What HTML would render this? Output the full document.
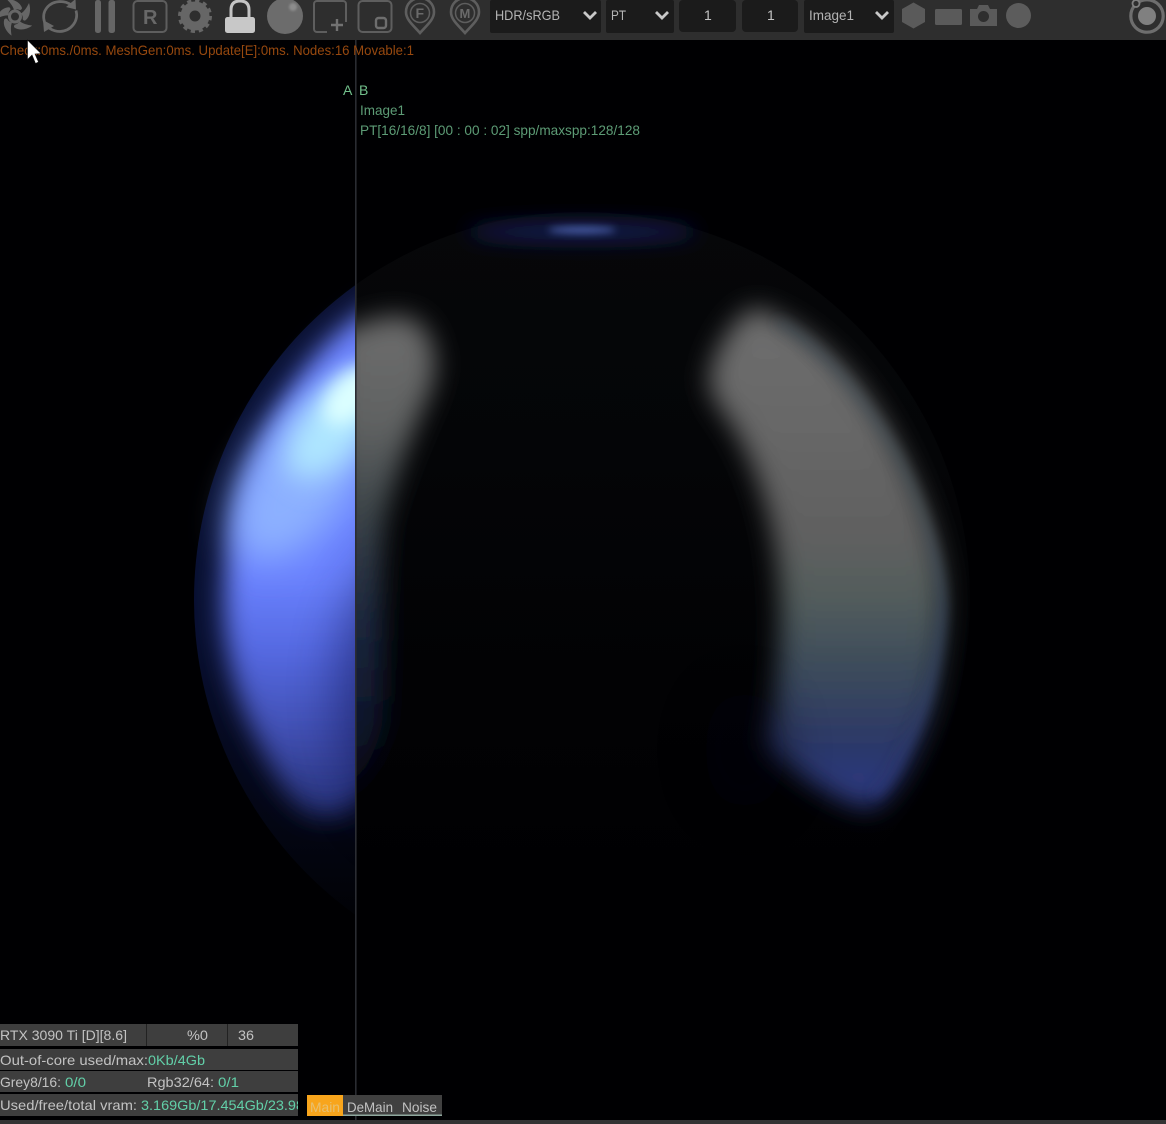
<!DOCTYPE html>
<html><head><meta charset="utf-8"><style>
html,body{margin:0;padding:0;background:#000;width:1166px;height:1124px;overflow:hidden}
svg{display:block}
text{font-family:"Liberation Sans",sans-serif;font-size:14px}
</style></head><body>
<svg width="1166" height="1124" viewBox="0 0 1166 1124" xmlns="http://www.w3.org/2000/svg">
<defs>
<clipPath id="L"><rect x="0" y="40" width="356" height="1080"/></clipPath>
<clipPath id="R"><rect x="356" y="40" width="810" height="1080"/></clipPath>
<filter id="b18" x="-80%" y="-80%" width="260%" height="260%"><feGaussianBlur stdDeviation="18"/></filter>
<filter id="b14" x="-60%" y="-60%" width="220%" height="220%"><feGaussianBlur stdDeviation="14"/></filter>
<filter id="b11" x="-60%" y="-60%" width="220%" height="220%"><feGaussianBlur stdDeviation="11"/></filter>
<filter id="b13" x="-60%" y="-60%" width="220%" height="220%"><feGaussianBlur stdDeviation="13"/></filter>
<filter id="b6" x="-60%" y="-60%" width="220%" height="220%"><feGaussianBlur stdDeviation="6"/></filter>
<filter id="b9" x="-60%" y="-60%" width="220%" height="220%"><feGaussianBlur stdDeviation="9"/></filter>
<filter id="b24" x="-80%" y="-80%" width="260%" height="260%"><feGaussianBlur stdDeviation="24"/></filter>
<filter id="b4" x="-50%" y="-200%" width="200%" height="500%"><feGaussianBlur stdDeviation="4"/></filter>
<filter id="bw" x="-50%" y="-300%" width="200%" height="700%"><feGaussianBlur stdDeviation="10"/></filter>
<filter id="b1" x="-60%" y="-60%" width="220%" height="220%"><feGaussianBlur stdDeviation="1"/></filter>
<linearGradient id="dim" x1="0" y1="285" x2="0" y2="915" gradientUnits="userSpaceOnUse">
<stop offset="0" stop-color="#0a1030"/><stop offset=".15" stop-color="#0a1236"/><stop offset=".55" stop-color="#080f30"/><stop offset=".8" stop-color="#040718"/><stop offset="1" stop-color="#010206"/></linearGradient>
<linearGradient id="blue" x1="310" y1="330" x2="310" y2="820" gradientUnits="userSpaceOnUse">
<stop offset="0" stop-color="#6c82ff"/><stop offset=".5" stop-color="#6a82ff"/><stop offset=".66" stop-color="#5468e0"/><stop offset=".84" stop-color="#3e4cac"/><stop offset="1" stop-color="#242f74"/></linearGradient>
<linearGradient id="gl" x1="0" y1="320" x2="0" y2="790" gradientUnits="userSpaceOnUse">
<stop offset="0" stop-color="#6c6c6c"/><stop offset=".22" stop-color="#606262"/><stop offset=".4" stop-color="#3e464a"/><stop offset=".64" stop-color="#1c2840"/><stop offset="1" stop-color="#050a20"/></linearGradient>
<linearGradient id="gr" x1="0" y1="315" x2="0" y2="805" gradientUnits="userSpaceOnUse">
<stop offset="0" stop-color="#6e6e6e"/><stop offset=".45" stop-color="#606060"/><stop offset=".58" stop-color="#525c5b"/><stop offset=".72" stop-color="#3c4b5a"/><stop offset=".88" stop-color="#2b3768"/><stop offset="1" stop-color="#2e3c88"/></linearGradient>
<linearGradient id="rim" x1="0" y1="320" x2="0" y2="800" gradientUnits="userSpaceOnUse">
<stop offset="0" stop-color="#3e5262"/><stop offset=".4" stop-color="#5e747e"/><stop offset=".65" stop-color="#50689a"/><stop offset="1" stop-color="#3848a0"/></linearGradient>
<linearGradient id="wash" x1="0" y1="212" x2="0" y2="900" gradientUnits="userSpaceOnUse">
<stop offset="0" stop-color="#060709"/><stop offset=".35" stop-color="#040507"/><stop offset=".7" stop-color="#020204"/><stop offset="1" stop-color="#000002"/></linearGradient>
<path id="blade" d="M14 10 C13 6 10 2.500 6.500 -1 C13 -1 20 2 22 8 C22 9 21 10 20 10 C18 9 16 9 14 10 Z"/>
</defs>

<rect width="1166" height="1124" fill="#000002"/>

<!-- A side -->
<g clip-path="url(#L)">
<circle cx="582" cy="600" r="388" fill="url(#dim)"/>
<path d="M380 300 L356 318 C316 346 278 398 252 462 C234 510 224 560 224 602 C224 652 236 700 258 742 C276 780 296 812 320 816 C338 818 350 812 380 780 Z" fill="url(#blue)" filter="url(#b13)"/>
<ellipse cx="420" cy="690" rx="85" ry="150" fill="#000030" opacity=".42" filter="url(#b24)"/>
<ellipse cx="300" cy="480" rx="92" ry="50" transform="rotate(-55 300 480)" fill="#8cb0ff" filter="url(#b18)"/>
<ellipse cx="335" cy="425" rx="65" ry="32" transform="rotate(-50 335 425)" fill="#aee6ff" filter="url(#b14)"/>
<ellipse cx="352" cy="395" rx="36" ry="20" transform="rotate(-48 352 395)" fill="#dcffff" filter="url(#b9)"/>
</g>

<!-- B side -->
<g clip-path="url(#R)">
<circle cx="582" cy="600" r="388" fill="url(#wash)"/>
<ellipse cx="582" cy="232" rx="115" ry="9" fill="#131e58" filter="url(#bw)"/>
<ellipse cx="582" cy="230" rx="34" ry="3.500" fill="#4c60aa" filter="url(#b4)"/>
<path d="M335 335 C365 322 395 310 414 320 C436 335 440 365 430 392 C414 428 396 470 384 525 C378 590 386 660 382 725 C372 768 350 790 335 790 Z" fill="url(#gl)" filter="url(#b13)"/>
<path d="M757 308 C795 322 832 350 862 390 C892 430 922 490 937 550 C947 590 945 640 933 700 C919 750 900 788 872 808 C850 808 800 780 765 745 C778 695 784 625 778 572 C774 522 758 472 736 432 C723 408 706 398 710 372 C718 340 742 310 757 308 Z" fill="url(#gr)" filter="url(#b13)"/>
<path d="M778 322 C820 345 862 395 897 455 C922 505 940 560 942 605 C940 655 927 710 907 745 C897 768 887 785 874 795" fill="none" stroke="url(#rim)" stroke-width="5" filter="url(#b6)" opacity=".7"/>
<ellipse cx="745" cy="750" rx="40" ry="60" fill="#000008" opacity=".4" filter="url(#b24)"/>
</g>

<!-- divider -->
<rect x="355" y="40" width="1.6" height="1080" fill="#2a2c32"/>

<!-- toolbar -->
<rect width="1166" height="40" fill="#2e2e2e"/>
<g fill="#666">
<use href="#blade"/>
<use href="#blade" transform="rotate(72 15 16.500)"/>
<use href="#blade" transform="rotate(144 15 16.500)"/>
<use href="#blade" transform="rotate(216 15 16.500)"/>
<use href="#blade" transform="rotate(288 15 16.500)"/>
</g>
<circle cx="15" cy="16.500" r="5.500" fill="none" stroke="#666" stroke-width="3"/>
<g fill="none" stroke="#686868" stroke-width="2.700">
<path d="M44.500 22 C41 11 49 2 60 1.500 C64 1.500 68 2.500 71 5"/>
<path d="M76 10.500 C79 21 71 31 60 31.500 C56 31.500 52 30 49 28"/>
</g>
<path d="M66 7 L76 9.500 L75.500 -1 Z M43 20 L54 26 L44 32 Z" fill="#686868"/>
<rect x="95" y="0" width="6" height="33" rx="2.500" fill="#666"/>
<rect x="108.500" y="0" width="6.500" height="33" rx="2.500" fill="#666"/>
<rect x="133.500" y="1" width="33" height="31" rx="4" fill="none" stroke="#5e5e5e" stroke-width="2"/>
<text x="143" y="24" fill="#686868" style="font-size:20px;font-weight:bold">R</text>
<circle cx="195" cy="16" r="14.500" fill="none" stroke="#666" stroke-width="5" stroke-dasharray="4 3.590"/>
<circle cx="195" cy="16" r="10" fill="none" stroke="#666" stroke-width="9"/>
<path d="M231 20 V10 C231 4 234 1 240 1 C246 1 249 4 249 10 V20" fill="none" stroke="#c4c4c4" stroke-width="3"/>
<rect x="225" y="17" width="30" height="16" rx="2.500" fill="#c8c8c8"/>
<circle cx="285" cy="16" r="18" fill="#6c6c6c"/>
<circle cx="293" cy="7" r="4" fill="#8c8c8c" filter="url(#b1)"/>
<path d="M327 32 H317 A3 3 0 0 1 314 29 V4 A3 3 0 0 1 317 1 H343 A3 3 0 0 1 346 4 V22" fill="none" stroke="#5e5e5e" stroke-width="2"/>
<path d="M337 19 V31 M331 25 H343" stroke="#727272" stroke-width="2.400"/>
<rect x="358.500" y="1" width="33" height="31" rx="4" fill="none" stroke="#5e5e5e" stroke-width="2"/>
<rect x="376" y="18" width="10" height="10" rx="2.500" fill="none" stroke="#6e6e6e" stroke-width="2.400"/>
<path d="M420 33 C414 26 406 20 406 12 C406 4 412 -2 420 -2 C428 -2 434 4 434 12 C434 20 426 26 420 33 Z" fill="none" stroke="#5e5e5e" stroke-width="2.600"/>
<circle cx="420" cy="13" r="9.500" fill="none" stroke="#5e5e5e" stroke-width="1.500"/>
<text x="415.500" y="18" fill="#6a6a6a" style="font-size:14px;font-weight:bold">F</text>
<path d="M465 33 C459 26 451 20 451 12 C451 4 457 -2 465 -2 C473 -2 479 4 479 12 C479 20 471 26 465 33 Z" fill="none" stroke="#5e5e5e" stroke-width="2.600"/>
<circle cx="465" cy="13" r="9.500" fill="none" stroke="#5e5e5e" stroke-width="1.500"/>
<text x="459.500" y="18" fill="#6a6a6a" style="font-size:13px;font-weight:bold">M</text>

<!-- selects -->
<rect x="490" y="0" width="111" height="33" rx="2" fill="#1b1b1b"/>
<rect x="606" y="0" width="68" height="33" rx="2" fill="#1b1b1b"/>
<rect x="679" y="0" width="57" height="32" rx="4" fill="#1b1b1b"/>
<rect x="742" y="0" width="56" height="32" rx="4" fill="#1b1b1b"/>
<rect x="804" y="0" width="90" height="33" rx="2" fill="#1b1b1b"/>
<text x="495" y="20" fill="#b4b4b4" textLength="65" lengthAdjust="spacingAndGlyphs">HDR/sRGB</text>
<text x="611" y="20" fill="#b4b4b4" textLength="15" lengthAdjust="spacingAndGlyphs">PT</text>
<text x="704" y="20" fill="#c4c4c4">1</text>
<text x="767" y="20" fill="#c4c4c4">1</text>
<text x="809" y="20" fill="#b4b4b4" textLength="45" lengthAdjust="spacingAndGlyphs">Image1</text>
<g fill="none" stroke="#c8c8c8" stroke-width="2.800">
<path d="M584 12 L590 18 L596 12"/><path d="M656 12 L662 18 L668 12"/><path d="M876 12 L882 18 L888 12"/>
</g>

<!-- right icons -->
<path d="M913.500 2.500 L925 9 V22 L913.500 28.500 L902 22 V9 Z" fill="#5a5a5a"/>
<rect x="935" y="9" width="27" height="16" rx="1.500" fill="#5a5a5a"/>
<path d="M970 9 H977 L979 5 H988 L990 9 H997 V26 H970 Z" fill="#5a5a5a"/>
<circle cx="983.500" cy="16.500" r="5.500" fill="#2e2e2e"/>
<circle cx="1018.500" cy="15.500" r="12.500" fill="#5c5c5c"/>
<circle cx="1147" cy="16" r="16.200" fill="none" stroke="#6e6e6e" stroke-width="3.200"/>
<circle cx="1147" cy="16" r="9" fill="#808080"/>
<circle cx="1136" cy="3.500" r="3.500" fill="#2e2e2e" stroke="#808080" stroke-width="1.800"/>

<!-- status text -->
<text x="0" y="55" fill="#96480f" textLength="414" lengthAdjust="spacingAndGlyphs">Check:0ms./0ms. MeshGen:0ms. Update[E]:0ms. Nodes:16 Movable:1</text>
<path d="M27.500 40 V59.500 L32 55 L35.500 63.500 L38.500 62 L35 54 L41 53.500 Z" fill="#fff" stroke="#111" stroke-width=".6"/>
<text x="343" y="95" fill="#72c08c">A</text>
<text x="359" y="95" fill="#72c08c">B</text>
<text x="360" y="115" fill="#5d9c76" textLength="45" lengthAdjust="spacingAndGlyphs">Image1</text>
<text x="360" y="135" fill="#5d9c76" textLength="280" lengthAdjust="spacingAndGlyphs">PT[16/16/8] [00 : 00 : 02] spp/maxspp:128/128</text>

<!-- bottom panel -->
<rect x="0" y="1024" width="298" height="22" fill="#3e3e3e"/>
<rect x="146" y="1024" width="1" height="22" fill="#222"/>
<rect x="227" y="1024" width="1" height="22" fill="#222"/>
<rect x="0" y="1049" width="298" height="21" fill="#3e3e3e"/>
<rect x="0" y="1071" width="298" height="21" fill="#3e3e3e"/>
<rect x="0" y="1094" width="298" height="22" fill="#3e3e3e"/>
<g fill="#c2c2c2">
<text x="0" y="1040" textLength="127" lengthAdjust="spacingAndGlyphs">RTX 3090 Ti [D][8.6]</text>
<text x="187" y="1040" textLength="21" lengthAdjust="spacingAndGlyphs">%0</text>
<text x="238" y="1040" textLength="16" lengthAdjust="spacingAndGlyphs">36</text>
<text x="0" y="1065" textLength="148" lengthAdjust="spacingAndGlyphs">Out-of-core used/max:</text>
<text x="0" y="1087" textLength="61" lengthAdjust="spacingAndGlyphs">Grey8/16:</text>
<text x="147" y="1087" textLength="67" lengthAdjust="spacingAndGlyphs">Rgb32/64:</text>
<text x="0" y="1110" textLength="137" lengthAdjust="spacingAndGlyphs">Used/free/total vram:</text>
</g>
<g fill="#62cfa8">
<text x="148" y="1065" textLength="57" lengthAdjust="spacingAndGlyphs">0Kb/4Gb</text>
<text x="65" y="1087" textLength="21" lengthAdjust="spacingAndGlyphs">0/0</text>
<text x="218" y="1087" textLength="21" lengthAdjust="spacingAndGlyphs">0/1</text>
</g>
<svg x="0" y="1094" width="298" height="22"><text x="141" y="16" fill="#62cfa8" textLength="163" lengthAdjust="spacingAndGlyphs">3.169Gb/17.454Gb/23.98</text></svg>

<rect x="307" y="1095" width="135" height="21" fill="#404040"/>
<rect x="343" y="1114.500" width="99" height="1.500" fill="#8fa89e"/>
<rect x="307" y="1095" width="36" height="21" fill="#f8a51c"/>
<text x="310" y="1112" fill="#e8c070" textLength="30" lengthAdjust="spacingAndGlyphs">Main</text>
<text x="347" y="1112" fill="#c2c2c2" textLength="46" lengthAdjust="spacingAndGlyphs">DeMain</text>
<text x="402" y="1112" fill="#c2c2c2" textLength="35" lengthAdjust="spacingAndGlyphs">Noise</text>

<rect x="0" y="1120" width="1166" height="4" fill="#333"/>
</svg>
</body></html>
